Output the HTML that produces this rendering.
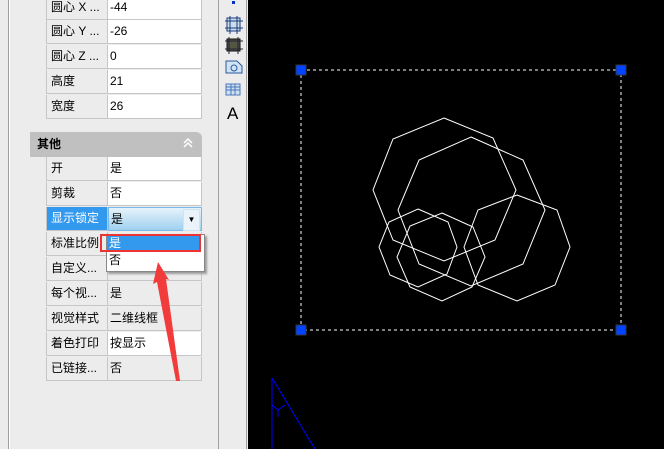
<!DOCTYPE html>
<html><head><meta charset="utf-8"><style>
body{margin:0;width:664px;height:449px;overflow:hidden;background:#000;font-family:"Liberation Sans","Noto Sans CJK SC",sans-serif;font-size:12px;color:#000;position:relative}
.abs{position:absolute}
#panel{left:0;top:0;width:218px;height:449px;background:#ececec}
.k,.v{position:absolute;height:24px;line-height:22px;box-sizing:border-box;border-right:1px solid #c6c6c6;border-bottom:1px solid #c6c6c6}
.k{left:46px;width:62px;padding-left:4px;background:#ececec;border-left:1px solid #c6c6c6}
.v{left:108px;width:94px;padding-left:2px;background:#fff}
.g{background:#ececec}
</style></head><body>
<div id="panel" class="abs"></div>
<div class="abs" style="left:8px;top:0;width:1px;height:449px;background:#a0a0a0"></div>
<div class="abs" style="left:9px;top:0;width:1px;height:449px;background:#fff"></div>

<div class="k" style="top:-4px">圆心 X ...</div><div class="v" style="top:-4px">-44</div>
<div class="k" style="top:20px">圆心 Y ...</div><div class="v" style="top:20px">-26</div>
<div class="k" style="top:45px">圆心 Z ...</div><div class="v" style="top:45px">0</div>
<div class="k" style="top:70px">高度</div><div class="v" style="top:70px">21</div>
<div class="k" style="top:95px">宽度</div><div class="v" style="top:95px">26</div>

<div class="abs" style="left:30px;top:132px;width:172px;height:25px;background:#c0c0c0;border-radius:0 6px 0 0;line-height:24px;font-weight:bold;padding-left:7px;box-sizing:border-box">其他</div>
<svg class="abs" style="left:182px;top:137px" width="12" height="12"><path d="M2 6l4-4 4 4M2 10l4-4 4 4" fill="none" stroke="#fff" stroke-width="1.5"/></svg>

<div class="k" style="top:157px">开</div><div class="v" style="top:157px">是</div>
<div class="k" style="top:182px">剪裁</div><div class="v" style="top:182px">否</div>
<div class="k" style="top:207px;background:#3399ee;color:#fff">显示锁定</div>
<div class="v" style="top:207px;background:linear-gradient(#e6f3fb,#9fd0ef);border:1px solid #7ab8e8">是<span style="position:absolute;right:1px;top:1px;width:15px;height:20px;background:#eaf3f9;border:1px solid #cfe4f2;font-size:8px;text-align:center;line-height:20px">▼</span></div>
<div class="k" style="top:232px">标准比例</div><div class="v g" style="top:232px"></div>
<div class="k" style="top:257px">自定义...</div><div class="v g" style="top:257px">4</div>
<div class="k" style="top:282px">每个视...</div><div class="v g" style="top:282px">是</div>
<div class="k" style="top:307px">视觉样式</div><div class="v g" style="top:307px">二维线框</div>
<div class="k" style="top:332px">着色打印</div><div class="v" style="top:332px">按显示</div>
<div class="k" style="top:357px">已链接...</div><div class="v g" style="top:357px">否</div>

<div class="abs" style="left:106px;top:234px;width:97px;height:36px;background:#fff;border:1px solid #888;box-shadow:2px 2px 2px #999"></div>
<div class="abs" style="left:107px;top:236px;width:93px;height:15px;background:#3399ee;color:#fff;line-height:15px;padding-left:2px;box-sizing:border-box">是</div>
<div class="abs" style="left:100px;top:234px;width:101px;height:18px;border:2px solid #ee3333;box-sizing:border-box"></div>
<div class="abs" style="left:109px;top:252px;line-height:16px">否</div>

<svg class="abs" style="left:0;top:0" width="664" height="449">
<polygon points="158,262 153,284 157,282 176,381 180,381 166,279 169,280" fill="#f23c3c"/>
<rect x="218" y="0" width="30" height="449" fill="#ececec"/>
<line x1="218.5" y1="0" x2="218.5" y2="449" stroke="#a0a0a0"/>
<line x1="246.5" y1="0" x2="246.5" y2="449" stroke="#a0a0a0"/>
<rect x="232" y="1" width="3" height="3" fill="#0033cc"/>
<g stroke="#1a3a7a" fill="none"><rect x="227" y="18" width="13" height="13" fill="#cde"/><path d="M225 21h18M225 28h18M230 16v18M237 16v18"/></g>
<g stroke="#111"><rect x="227" y="39" width="13" height="12" fill="#554"/><path d="M225 41h18M225 49h18M229 37v17M238 37v17" stroke="#223"/></g>
<path d="M226 61h11l5 5v7h-16z" fill="#cfe3f5" stroke="#2a5a9a"/><circle cx="234" cy="68" r="3" fill="none" stroke="#2a5a9a"/>
<rect x="226" y="84" width="14" height="11" fill="#cfe0f5" stroke="#4a78b8"/><path d="M226 87h14M226 90h14M231 84v11M235 84v11" stroke="#4a78b8"/>
<text x="227" y="119" font-family="Liberation Sans" font-size="17" fill="#000">A</text>
<g fill="none" stroke="#fff" stroke-width="1">
<polygon points="444,118 493,138 516,190 495,240 444,261 393,240 373,190 393,139"/>
<polygon points="471,137 523,160 545,210 523,264 471,286 419,264 398,210 419,160"/>
<polygon points="517,195 557,210 570,247 555,285 517,301 478,285 464,247 478,210"/>
<polygon points="418,209 448,222 457,247 447,274 418,287 390,275 379,247 389,222"/>
<polygon points="442,213 473,227 485,257 472,287 442,301 410,287 397,257 410,226"/>
<rect x="301" y="70" width="320" height="260" stroke-dasharray="3,3"/>
</g>
<g fill="#0044ff" stroke="#334"><rect x="296" y="65" width="10" height="10"/><rect x="616" y="65" width="10" height="10"/><rect x="296" y="325" width="10" height="10"/><rect x="616" y="325" width="10" height="10"/></g>
<g stroke="#0000ff" fill="none"><path d="M272 378V449M272 378L315 449M272 405L278 410L285 405M278 410V417"/></g>
</svg>
</body></html>
